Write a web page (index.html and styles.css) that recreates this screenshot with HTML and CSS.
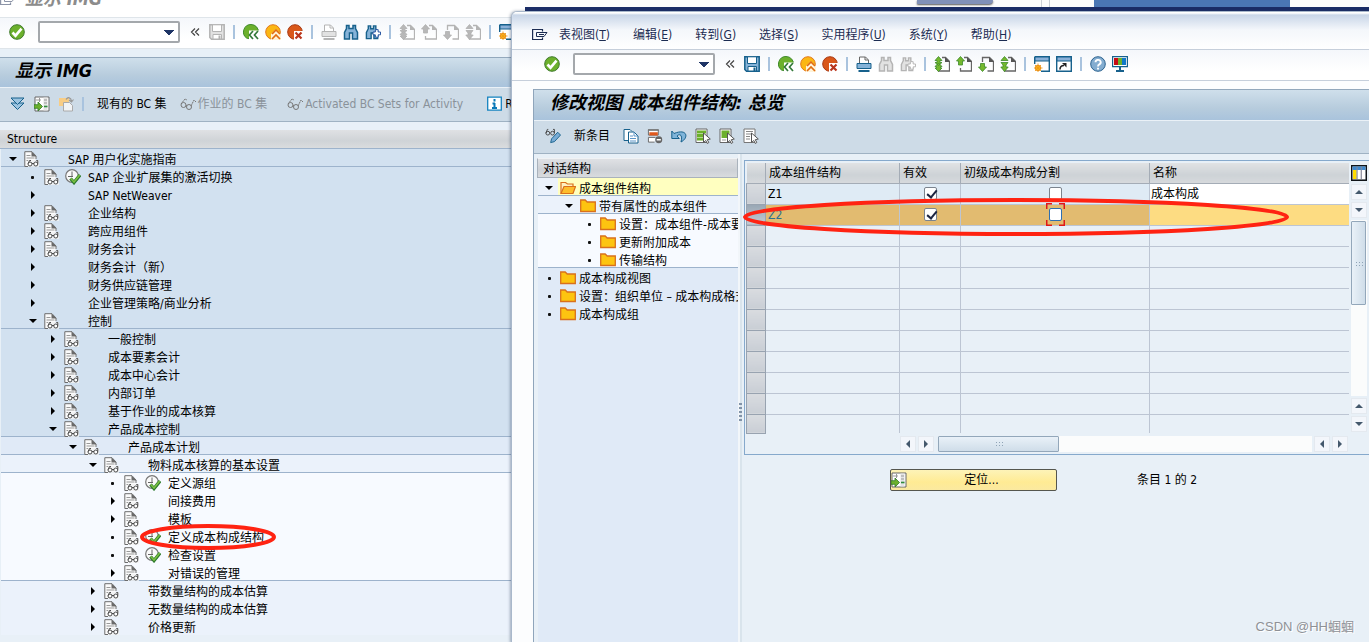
FILE: index.html
```html
<!DOCTYPE html>
<html lang="zh-CN">
<head>
<meta charset="utf-8">
<title>修改视图 成本组件结构: 总览</title>
<link rel="stylesheet" href="styles.css">
</head>
<body>
<svg class="sprite" aria-hidden="true">
  <symbol id="ok" viewBox="0 0 16 16"><circle cx="8" cy="8" r="7.3" fill="#6cb02c" stroke="#3f7a2c"/><path d="M3.5 8.5l3 3.2 6-7" fill="none" stroke="#fff" stroke-width="2.6"/></symbol>
  <symbol id="less" viewBox="0 0 10 16"><path d="M5 4.500L1.500 8 5 11.500M9 4.500L5.500 8 9 11.500" fill="none" stroke="#444" stroke-width="1.200"/></symbol>
  <symbol id="save" viewBox="0 0 16 16"><path d="M.8.8h14.4v14.400H2.500L.8 13.500z" class="mid edge" stroke-width="1.500"/><path d="M3.500.8h9v6.700h-9z" class="pale edge"/><path d="M4 10.500h8.500V15H4z" class="pale edge"/><path d="M10.500 11.500V15" class="edge" stroke-width="2"/></symbol>
  <symbol id="back" viewBox="0 0 16 16"><path d="M8 .5A7.500 7.500 0 0 0 3.500 14L9 15.500 15.500 9A7.500 7.500 0 0 0 8 .5z" fill="#6cb02c" stroke="#3f8a2c"/><path d="M6 6.500h10V16H6z" fill="#fff"/><path d="M10 7l-3.500 4 3.500 4M15 7l-3.500 4 3.500 4" fill="none" stroke="#34793a" stroke-width="1.700"/></symbol>
  <symbol id="exit" viewBox="0 0 16 16"><circle cx="8" cy="8" r="7.300" fill="#fbb714" stroke="#e2791c"/><path d="M6 10l5-5 5 5v6H6z" fill="#fff3d8"/><path d="M7 10l4-4 4 4M7 15l4-4 4 4" fill="none" stroke="#e06c10" stroke-width="1.700"/></symbol>
  <symbol id="cancel" viewBox="0 0 16 16"><circle cx="8" cy="8" r="7.300" fill="#d9581a" stroke="#a83a14"/><path d="M7 7h9v9H7z" fill="#fff"/><path d="M8.500 8.500l6 6M14.500 8.500l-6 6" stroke="#b9351c" stroke-width="2.200"/></symbol>
  <symbol id="print" viewBox="0 0 16 16"><path d="M3.500 8V1h6l3 3v4" fill="#fff" class="line" /><path d="M9 1v3h3" fill="none" class="line"/><path d="M1 7.500h14v5H1z" class="mid edge"/><path d="M2.500 15h11" class="edge" stroke-width="2"/></symbol>
  <symbol id="find" viewBox="0 0 16 16"><path d="M3.500 1.500h2.500v3h4v-3h2.500v3l2 4v6.500h-5V9h-3v6h-5V8.500l2-4z" class="mid edge" stroke-width="1.500"/></symbol>
  <symbol id="findnext" viewBox="0 0 17 16"><path d="M3.500 1.500h2.500v3h3v-3h2.500v3l2 4v6.500h-4V9h-3v6h-5V8.500l2-4z" class="mid edge" stroke-width="1.500"/><path d="M11 5.500h3v2.500h2.500v3H14v2.500h-3V11H8.500V8H11z" fill="#fff" class="rim"/></symbol>
  <symbol id="page" viewBox="0 0 16 16"><path d="M8 1.500h3.500l4 4V15H4.500v-3" fill="none" class="line" stroke-width="1.300"/><path d="M11 1v5h5z" class="fold"/></symbol>
  <symbol id="first" viewBox="0 0 16 16"><use href="#page"/><path d="M4.500.5L8 4.500H6v2h2L4.500 9.500 1 6.500h2v-2H1zM4.500 7L8 10.500H6.500V12H8l-3.500 3.500L1 12h1.500v-1.500H1z" class="go"/></symbol>
  <symbol id="prev" viewBox="0 0 16 16"><use href="#page"/><path d="M4.500.5L8.500 5h-2v4h-4V5h-2z" class="go"/></symbol>
  <symbol id="next" viewBox="0 0 16 16"><path d="M4.500 6V1.500h7l4 4V15H9.500" fill="none" class="line" stroke-width="1.300"/><path d="M11 1v5h5z" class="fold"/><path d="M4.500 15.500L.5 11h2V7.500h4V11h2z" class="go"/></symbol>
  <symbol id="last" viewBox="0 0 16 16"><use href="#page"/><path d="M4.500.5L8 4.500H1zM4.500 15.500L.8 11H3V9L1 6.500h7L6 9v2h2.200z" class="go"/></symbol>
  <symbol id="newwin" viewBox="0 0 16 16"><path d="M.7.7h14.600v14.600H7M.7.7V8" fill="#fff" stroke="#17618c" stroke-width="1.400"/><path d="M1 1h14v4H1z" fill="#8ab0d8" stroke="#17618c"/><circle cx="4" cy="12" r="2.700" fill="#fbc21c" stroke="#e58a1a"/><path d="M4 7.500v9M-.5 12h9M1 9l6 6M7 9l-6 6" stroke="#f09a18" stroke-width=".9"/></symbol>
  <symbol id="shortcut" viewBox="0 0 16 16"><path d="M.7.7h14.600v14.600H.7z" fill="#fff" stroke="#17618c" stroke-width="1.400"/><path d="M1 1h14v4H1z" fill="#8ab0d8" stroke="#17618c"/><path d="M4 13.500c0-3 1.500-4 4-4" fill="none" stroke="#222" stroke-width="1.600"/><path d="M6 7h4.500v4.500z" fill="#222"/></symbol>
  <symbol id="help" viewBox="0 0 16 16"><circle cx="8" cy="8" r="7.300" fill="#84add0" stroke="#2d6490"/><path d="M5.500 6.200a2.600 2.400 0 1 1 3.800 2.200Q8 9 8 10.500M8 11.800v1.700" fill="none" stroke="#fff" stroke-width="1.900"/></symbol>
  <symbol id="screen" viewBox="0 0 16 16"><path d="M.6 .6h14.800v10H.6z" fill="#fff" stroke="#17618c" stroke-width="1.200"/><path d="M2 2h4v7H2z" fill="#c80c14"/><path d="M6 2h4v7H6z" fill="#6cb02c"/><path d="M10 2h4v7h-4z" fill="#1078c8"/><path d="M8 11v4M4 15h8" stroke="#17618c" stroke-width="2"/></symbol>
  <symbol id="doc" viewBox="0 0 16 16"><path d="M4 15.500H.8V.7H8L12 5v3" fill="#fafafa" stroke="#6d6d6d"/><path d="M7.500.5V5.500h5z" fill="#6a6a6a"/><path d="M2.500 4.500h4M2.500 7h8M2.500 9.500h3" stroke="#999"/><path d="M4 9h11v7H4z" fill="#f2f2f2" opacity=".8"/><circle cx="6" cy="13" r="2" fill="#fff" stroke="#4a4a4a"/><circle cx="11.800" cy="13" r="2" fill="#fff" stroke="#4a4a4a"/><path d="M8 12.500h2M4.200 12.500L5.500 9.500H7M13.800 12.500V9.500h-1.500" fill="none" stroke="#4a4a4a"/></symbol>
  <symbol id="run" viewBox="0 0 16 16"><circle cx="7" cy="7" r="6.300" fill="#fafafa" stroke="#777" stroke-width="1.200"/><path d="M7 2.500V8M3 7.500h5" stroke="#666" fill="none"/><path d="M5.500 9.500l3.500 4 6-7.500" fill="none" stroke="#2d7a2d" stroke-width="3.400"/><path d="M5.800 9.500l3.200 3.500 5.700-7" fill="none" stroke="#7cc142" stroke-width="1.500"/></symbol>
  <symbol id="expand" viewBox="0 0 16 16"><path d="M1 7h13L7.500 13.500z" fill="#9cc4e0" stroke="#17618c"/><path d="M1 2h13L7.500 8.500z" fill="#9cc4e0" stroke="#17618c"/></symbol>
  <symbol id="goto" viewBox="0 0 16 16"><path d="M1 1h14v14H1z" fill="#fff" stroke="#666"/><path d="M11.500 1.500v13" stroke="#e4e4e4" stroke-width="4"/><path d="M2 4h5M5.500 2v4M10 4h3M10 7h3" stroke="#999"/><path d="M10 10.500h3.500" stroke="#2e8a3a" stroke-width="1.600"/><path d="M4 6l4.500 4.500L4 15v-2.700H0V8.700h4z" fill="#6cb02c" stroke="#2e7a2a" stroke-width=".8"/></symbol>
  <symbol id="paste" viewBox="0 0 16 16"><path d="M1 2h10v8H1z" fill="#f8cd85"/><path d="M5.500 6.500h6l3 3V15h-9z" fill="#f1f3f5" stroke="#aaa"/><path d="M8 3.500c2-3 5-2 5.500 1.500M11 4l2.500 2 2-2.500" fill="none" stroke="#999" stroke-width="1.200"/></symbol>
  <symbol id="glasses" viewBox="0 0 16 16"><circle cx="3.500" cy="9" r="2.500" fill="none" stroke="#777"/><circle cx="9" cy="11" r="2.500" fill="none" stroke="#777"/><path d="M1 8l4-5 2 1M11 10l3-6 2 2M6 9.500l1 .5" fill="none" stroke="#777" stroke-dasharray="2 .6"/></symbol>
  <symbol id="edit" viewBox="0 0 17 16"><circle cx="3" cy="5" r="2" fill="none" stroke="#444"/><circle cx="8" cy="5" r="2" fill="none" stroke="#444"/><path d="M1 5l1.500-4h1M10 5V1H8.500" fill="none" stroke="#444"/><path d="M6 15l1-4 6.500-7 3 3-6.500 7z" fill="#79acd6" stroke="#17618c"/></symbol>
  <symbol id="info" viewBox="0 0 16 16"><path d="M.7 1.200h13.600v13H.7z" fill="#fff" stroke="#1583c0" stroke-width="1.300"/><path d="M7.500 3v2.500M5.500 7.500H8M7.500 7v5M5 12h5" fill="none" stroke="#0878b8" stroke-width="2"/></symbol>
  <symbol id="copy" viewBox="0 0 16 16"><path d="M5 12.500H1v-11h6l2 2" fill="#fff" stroke="#17618c"/><path d="M5.500 4h5.500l4 4v7H5.500z" fill="#fff" stroke="#17618c"/><path d="M11 4v4h4M7 8h3M7 10.500h6M7 13h6" fill="none" stroke="#5b95c8"/></symbol>
  <symbol id="del" viewBox="0 0 17 16"><path d="M8 14.500H1.500v-5H9" fill="#fff" stroke="#666"/><path d="M1.500 1.500H12V7H1.500z" fill="#fff" stroke="#666"/><path d="M1 .8h11.500v1.700H1z" fill="#777"/><path d="M2.500 4h9v3.500h-9z" fill="#e0581c"/><circle cx="12.500" cy="12" r="3.700" fill="#666"/><path d="M10.300 12h4.400" stroke="#fff" stroke-width="1.500"/></symbol>
  <symbol id="undo" viewBox="0 0 16 16"><path d="M.8 3v7.500h7.500L6 8c3-3 6-.5 4 6 8-4 6.500-14-7-8.500z" fill="#7fb4d9" stroke="#17618c"/></symbol>
  <symbol id="cursor" viewBox="0 0 16 16"><path d="M8.500 5v9.500l2.300-2 1.500 3 1.500-1-1.500-2.800 3-.7z" fill="#fff" stroke="#555"/></symbol>
  <symbol id="selall" viewBox="0 0 16 16"><path d="M1 1h11v13.500H1z" fill="#fff" stroke="#666"/><path d="M2 4h9M2 7.500h7M2 11h6" stroke="#6cb02c" stroke-width="2.800"/><use href="#cursor"/></symbol>
  <symbol id="selblock" viewBox="0 0 16 16"><path d="M1 1h11v13.500H1z" fill="#fff" stroke="#666"/><path d="M2.500 2.500h8V10h-8z" fill="#6cb02c"/><path d="M3 12h4" stroke="#999"/><use href="#cursor"/></symbol>
  <symbol id="desel" viewBox="0 0 16 16"><path d="M1 1h11v13.500H1z" fill="#fff" stroke="#777"/><path d="M3 3.500h7M3 6h6M3 8.500h4M3 11h4" stroke="#888"/><use href="#cursor"/></symbol>
  <symbol id="menu" viewBox="0 0 16 14"><path d="M10.500 3.500V1.500H.6v10h9.900V9.500" fill="none" stroke="#1c2c52" stroke-width="1.200"/><path d="M4.500 4.500h10.500l-3 4H4.500zM7 6.500h5" fill="none" stroke="#1c2c52"/></symbol>
  <symbol id="folder" viewBox="0 0 16 14"><path d="M.7 12.500V1h4.500l2 2h8.100v9.500z" fill="#fdc410" stroke="#d9701c" stroke-width="1.300"/></symbol>
  <symbol id="folderopen" viewBox="0 0 16 14"><path d="M1 12.500V1.500h4.500l2 1.500h5.500v2.500" fill="#fff0c0" stroke="#d9701c" stroke-width="1.200"/><path d="M1 12.500l3-7h11.500l-2.500 7z" fill="#fdbd2c" stroke="#d9701c" stroke-width="1.200"/></symbol>
  <symbol id="config" viewBox="0 0 16 16"><path d="M.7.7h14.600v14.600H.7z" fill="#d7dde3" stroke="#101418" stroke-width="1.400"/><path d="M1.500 1.500h13v3.500h-13z" fill="#3e8ad0"/><path d="M2 5h3.500v9H2z" fill="#ffdc00"/><path d="M7 5h2.500v9H7zM11 5h3v9h-3z" fill="#fff"/><path d="M6 2v12M10.300 2v12" stroke="#889"/></symbol>
</svg>

<div class="desktop">
  <section class="img-window" aria-label="显示 IMG">
    <header class="img-caption"><svg class="i16"><use href="#menu"/></svg><span>显示 IMG</span></header>
    <div class="toolbar toolbar-img">
      <button class="tool ok" aria-label="确认"><svg class="i16"><use href="#ok"/></svg></button>
      <select class="command" aria-label="命令"><option></option></select>
      <button class="tool less" aria-label="收起"><svg class="i10"><use href="#less"/></svg></button>
      <button class="tool off" aria-label="保存" disabled><svg class="i16"><use href="#save"/></svg></button>
      <i class="sep"></i>
      <button class="tool" aria-label="返回"><svg class="i16"><use href="#back"/></svg></button>
      <button class="tool" aria-label="退出"><svg class="i16"><use href="#exit"/></svg></button>
      <button class="tool" aria-label="取消"><svg class="i16"><use href="#cancel"/></svg></button>
      <i class="sep"></i>
      <button class="tool off" aria-label="打印" disabled><svg class="i16"><use href="#print"/></svg></button>
      <button class="tool" aria-label="查找"><svg class="i16"><use href="#find"/></svg></button>
      <button class="tool" aria-label="查找下一个"><svg class="i16"><use href="#findnext"/></svg></button>
      <i class="sep"></i>
      <button class="tool off" aria-label="第一页" disabled><svg class="i16"><use href="#first"/></svg></button>
      <button class="tool off" aria-label="上一页" disabled><svg class="i16"><use href="#prev"/></svg></button>
      <button class="tool off" aria-label="下一页" disabled><svg class="i16"><use href="#next"/></svg></button>
      <button class="tool off" aria-label="最后一页" disabled><svg class="i16"><use href="#last"/></svg></button>
      <i class="sep"></i>
      <button class="tool" aria-label="新建会话"><svg class="i16"><use href="#newwin"/></svg></button>
    </div>
    <h1 class="title">显示 IMG</h1>
    <div class="appbar appbar-img">
      <button class="tool" aria-label="展开"><svg class="i16"><use href="#expand"/></svg></button>
      <button class="tool" aria-label="定位"><svg class="i16"><use href="#goto"/></svg></button>
      <button class="tool" aria-label="粘贴"><svg class="i16"><use href="#paste"/></svg></button>
      <i class="sep"></i>
      <button class="tool text">现有的 BC 集</button>
      <button class="tool text dim" disabled><svg class="i16"><use href="#glasses"/></svg>作业的 BC 集</button>
      <button class="tool text dim" disabled><svg class="i16"><use href="#glasses"/></svg>Activated BC Sets for Activity</button>
      <button class="tool text"><svg class="i16"><use href="#info"/></svg>R</button>
    </div>
    <div class="tree-head">Structure</div>
    <ul class="tree img-tree">
      <li class="l0 rule"><i class="down"></i><svg class="i16"><use href="#doc"/></svg><span>SAP 用户化实施指南</span></li>
      <li class="l1"><i class="dot"></i><svg class="i16"><use href="#doc"/></svg><svg class="i16"><use href="#run"/></svg><span>SAP 企业扩展集的激活切换</span></li>
      <li class="l1"><i class="right"></i><span>SAP NetWeaver</span></li>
      <li class="l1"><i class="right"></i><svg class="i16"><use href="#doc"/></svg><span>企业结构</span></li>
      <li class="l1"><i class="right"></i><svg class="i16"><use href="#doc"/></svg><span>跨应用组件</span></li>
      <li class="l1"><i class="right"></i><svg class="i16"><use href="#doc"/></svg><span>财务会计</span></li>
      <li class="l1"><i class="right"></i><span>财务会计（新）</span></li>
      <li class="l1"><i class="right"></i><span>财务供应链管理</span></li>
      <li class="l1"><i class="right"></i><span>企业管理策略/商业分析</span></li>
      <li class="l1 rule"><i class="down"></i><svg class="i16"><use href="#doc"/></svg><span>控制</span></li>
      <li class="l2"><i class="right"></i><svg class="i16"><use href="#doc"/></svg><span>一般控制</span></li>
      <li class="l2"><i class="right"></i><svg class="i16"><use href="#doc"/></svg><span>成本要素会计</span></li>
      <li class="l2"><i class="right"></i><svg class="i16"><use href="#doc"/></svg><span>成本中心会计</span></li>
      <li class="l2"><i class="right"></i><svg class="i16"><use href="#doc"/></svg><span>内部订单</span></li>
      <li class="l2"><i class="right"></i><svg class="i16"><use href="#doc"/></svg><span>基于作业的成本核算</span></li>
      <li class="l2 rule"><i class="down"></i><svg class="i16"><use href="#doc"/></svg><span>产品成本控制</span></li>
      <li class="l3 rule"><i class="down"></i><svg class="i16"><use href="#doc"/></svg><span>产品成本计划</span></li>
      <li class="l4 rule"><i class="down"></i><svg class="i16"><use href="#doc"/></svg><span>物料成本核算的基本设置</span></li>
      <li class="l5"><i class="dot"></i><svg class="i16"><use href="#doc"/></svg><svg class="i16"><use href="#run"/></svg><span>定义源组</span></li>
      <li class="l5"><i class="right"></i><svg class="i16"><use href="#doc"/></svg><span>间接费用</span></li>
      <li class="l5"><i class="right"></i><svg class="i16"><use href="#doc"/></svg><span>模板</span></li>
      <li class="l5"><i class="dot"></i><svg class="i16"><use href="#doc"/></svg><svg class="i16"><use href="#run"/></svg><span>定义成本构成结构</span>
        <svg class="mark-small" viewBox="0 0 138 28"><ellipse cx="69" cy="14" rx="66" ry="11"/></svg></li>
      <li class="l5"><i class="dot"></i><svg class="i16"><use href="#doc"/></svg><svg class="i16"><use href="#run"/></svg><span>检查设置</span></li>
      <li class="l5 rule"><i class="right"></i><svg class="i16"><use href="#doc"/></svg><span>对错误的管理</span></li>
      <li class="l4"><i class="right"></i><svg class="i16"><use href="#doc"/></svg><span>带数量结构的成本估算</span></li>
      <li class="l4"><i class="right"></i><svg class="i16"><use href="#doc"/></svg><span>无数量结构的成本估算</span></li>
      <li class="l4"><i class="right"></i><svg class="i16"><use href="#doc"/></svg><span>价格更新</span></li>
    </ul>
  </section>

  <div class="behind"><i class="tab"></i><i class="gutter"></i><i class="photo"></i></div>

  <section class="view-window" aria-label="修改视图">
    <nav class="menubar">
      <svg class="i16"><use href="#menu"/></svg>
      <a href="#">表视图(<u>T</u>)</a><a href="#">编辑(<u>E</u>)</a><a href="#">转到(<u>G</u>)</a><a href="#">选择(<u>S</u>)</a><a href="#">实用程序(<u>U</u>)</a><a href="#">系统(<u>Y</u>)</a><a href="#">帮助(<u>H</u>)</a>
    </nav>
    <div class="toolbar toolbar-view">
      <button class="tool ok" aria-label="确认"><svg class="i16"><use href="#ok"/></svg></button>
      <select class="command" aria-label="命令"><option></option></select>
      <button class="tool less" aria-label="收起"><svg class="i10"><use href="#less"/></svg></button>
      <button class="tool" aria-label="保存"><svg class="i16"><use href="#save"/></svg></button>
      <i class="sep"></i>
      <button class="tool" aria-label="返回"><svg class="i16"><use href="#back"/></svg></button>
      <button class="tool" aria-label="退出"><svg class="i16"><use href="#exit"/></svg></button>
      <button class="tool" aria-label="取消"><svg class="i16"><use href="#cancel"/></svg></button>
      <i class="sep"></i>
      <button class="tool" aria-label="打印"><svg class="i16"><use href="#print"/></svg></button>
      <button class="tool off" aria-label="查找" disabled><svg class="i16"><use href="#find"/></svg></button>
      <button class="tool off" aria-label="查找下一个" disabled><svg class="i16"><use href="#findnext"/></svg></button>
      <i class="sep"></i>
      <button class="tool" aria-label="第一页"><svg class="i16"><use href="#first"/></svg></button>
      <button class="tool" aria-label="上一页"><svg class="i16"><use href="#prev"/></svg></button>
      <button class="tool" aria-label="下一页"><svg class="i16"><use href="#next"/></svg></button>
      <button class="tool" aria-label="最后一页"><svg class="i16"><use href="#last"/></svg></button>
      <i class="sep"></i>
      <button class="tool" aria-label="新建会话"><svg class="i16"><use href="#newwin"/></svg></button>
      <button class="tool" aria-label="快捷方式"><svg class="i16"><use href="#shortcut"/></svg></button>
      <i class="sep"></i>
      <button class="tool" aria-label="帮助"><svg class="i16"><use href="#help"/></svg></button>
      <button class="tool" aria-label="布局"><svg class="i16"><use href="#screen"/></svg></button>
    </div>
    <div class="frame">
      <h1 class="title">修改视图 成本组件结构: 总览</h1>
      <div class="appbar appbar-view">
        <button class="tool" aria-label="显示/更改"><svg class="i16"><use href="#edit"/></svg></button>
        <button class="tool text">新条目</button>
        <button class="tool" aria-label="复制"><svg class="i16"><use href="#copy"/></svg></button>
        <button class="tool" aria-label="删除"><svg class="i16"><use href="#del"/></svg></button>
        <button class="tool" aria-label="撤销"><svg class="i16"><use href="#undo"/></svg></button>
        <button class="tool" aria-label="全选"><svg class="i16"><use href="#selall"/></svg></button>
        <button class="tool" aria-label="选择块"><svg class="i16"><use href="#selblock"/></svg></button>
        <button class="tool" aria-label="取消全选"><svg class="i16"><use href="#desel"/></svg></button>
      </div>
      <div class="work">
        <aside class="dialog">
          <div class="dialog-head">对话结构</div>
          <ul class="tree dlg-tree">
            <li class="d0 current rule"><i class="down"></i><svg class="folder"><use href="#folderopen"/></svg><span>成本组件结构</span></li>
            <li class="d1 rule"><i class="down"></i><svg class="folder"><use href="#folder"/></svg><span>带有属性的成本组件</span></li>
            <li class="d2"><i class="dot"></i><svg class="folder"><use href="#folder"/></svg><span>设置：成本组件-成本要</span></li>
            <li class="d2"><i class="dot"></i><svg class="folder"><use href="#folder"/></svg><span>更新附加成本</span></li>
            <li class="d2 rule"><i class="dot"></i><svg class="folder"><use href="#folder"/></svg><span>传输结构</span></li>
            <li class="d0"><i class="dot"></i><svg class="folder"><use href="#folder"/></svg><span>成本构成视图</span></li>
            <li class="d0"><i class="dot"></i><svg class="folder"><use href="#folder"/></svg><span>设置：组织单位 – 成本构成格式</span></li>
            <li class="d0"><i class="dot"></i><svg class="folder"><use href="#folder"/></svg><span>成本构成组</span></li>
          </ul>
        </aside>
        <div class="splitter"><i></i></div>
        <main class="content">
          <div class="panel">
            <div class="panel-main">
              <table class="grid">
                <colgroup><col class="c-sel"><col class="c-key"><col class="c-act"><col class="c-split"><col></colgroup>
                <thead><tr><th></th><th>成本组件结构</th><th>有效</th><th>初级成本构成分割</th><th>名称</th></tr></thead>
                <tbody>
                  <tr class="first"><th></th><td>Z1</td><td class="mid-cell"><input type="checkbox" aria-label="Z1 有效" checked></td><td class="mid-cell"><input type="checkbox" aria-label="Z1 初级成本构成分割"></td><td class="name">成本构成</td></tr>
                  <tr class="picked"><th></th><td>Z2</td><td class="mid-cell"><input type="checkbox" aria-label="Z2 有效" checked></td><td class="mid-cell"><span class="focus"><input type="checkbox" aria-label="Z2 初级成本构成分割"><svg viewBox="0 0 19 23"><path d="M.5 6V.5H6M13 .5h5.500V6M18.500 17v5.500H13M6 22.500H.5V17"/></svg></span></td><td class="name"></td></tr>
                  <tr><th></th><td></td><td></td><td></td><td></td></tr>
                  <tr><th></th><td></td><td></td><td></td><td></td></tr>
                  <tr><th></th><td></td><td></td><td></td><td></td></tr>
                  <tr><th></th><td></td><td></td><td></td><td></td></tr>
                  <tr><th></th><td></td><td></td><td></td><td></td></tr>
                  <tr><th></th><td></td><td></td><td></td><td></td></tr>
                  <tr><th></th><td></td><td></td><td></td><td></td></tr>
                  <tr><th></th><td></td><td></td><td></td><td></td></tr>
                  <tr><th></th><td></td><td></td><td></td><td></td></tr>
                  <tr class="end"><th></th><td></td><td></td><td></td><td></td></tr>
                </tbody>
              </table>
              <div class="hscroll">
                <button class="arrow" aria-label="向左"><i class="tri-l"></i></button>
                <button class="arrow" aria-label="向右"><i class="tri-r"></i></button>
                <div class="htrack"><div class="hthumb"><i class="grip"></i></div></div>
                <button class="arrow" aria-label="向左"><i class="tri-l"></i></button>
                <button class="arrow" aria-label="向右"><i class="tri-r"></i></button>
              </div>
            </div>
            <div class="vscroll">
              <button class="tool config" aria-label="配置"><svg class="i16"><use href="#config"/></svg></button>
              <button class="arrow" aria-label="向上"><i class="tri-u"></i></button>
              <button class="arrow" aria-label="向下"><i class="tri-d"></i></button>
              <div class="vtrack"><div class="vthumb"><i class="grip"></i></div></div>
              <button class="arrow" aria-label="向上"><i class="tri-u"></i></button>
              <button class="arrow" aria-label="向下"><i class="tri-d"></i></button>
            </div>
            <svg class="mark-big" viewBox="0 0 550 40"><ellipse cx="275" cy="20" rx="271" ry="17"/></svg>
          </div>
          <div class="below">
            <button class="position"><svg class="i16"><use href="#goto"/></svg><span>定位...</span></button>
            <span>条目 1 的 2</span>
          </div>
        </main>
      </div>
    </div>
  </section>
  <div class="credit">CSDN @HH蝈蝈</div>
</div>
</body>
</html>
```

FILE: styles.css
```css
* { box-sizing: border-box; }

body {
  margin: 0;
  font: 12px/18px "DejaVu Sans Condensed", "Noto Sans", "Noto Sans CJK SC", sans-serif;
  color: #000;
}

.sprite { position: absolute; width: 0; height: 0; }
.desktop { position: relative; min-height: 100vh; overflow: hidden; background: #e8f0f7; }

/* icon paint */
.edge { stroke: var(--edge, #17618c); }
.mid { fill: var(--mid, #86b3d8); }
.pale { fill: #fff; }
.rim { stroke: var(--edge, #1c4c9c); }
.line { stroke: var(--line, #666); }
.fold { fill: var(--line, #555); }
.go { fill: var(--go, #74b82e); stroke: var(--go-edge, #3c8a2a); stroke-width: .8px; }
.off { --edge: #b4b4b4; --mid: #e2e2e2; --line: #b4b4b4; --go: #b8b8b8; --go-edge: #b0b0b0; }

.i16 { width: 16px; height: 16px; flex: none; display: block; }
.i10 { width: 10px; height: 16px; flex: none; display: block; }

.tool {
  display: flex; align-items: center; flex: none;
  padding: 0; border: 0; background: none;
  font: inherit; color: #000; white-space: nowrap;
}
.tool.dim { color: #8a929a; }
.tool.text { gap: 2px; }
.sep { flex: none; width: 2px; height: 14px; margin: 0 2px; background: #a9c3de; }

/* shared bars */
.toolbar { display: flex; align-items: center; gap: 6px; height: 31px; padding-bottom: 2px; background: linear-gradient(#f4f7fb, #fff 70%); }
.toolbar .ok { margin-right: 7px; }
.toolbar .less { margin: 0 3px 0 4px; }
.command {
  appearance: none; flex: none;
  width: 142px; height: 22px; margin: 0; padding: 0 20px 0 4px;
  border: 2px solid #a4a8ac; border-radius: 2px;
  background-color: #fff;
  background-image: linear-gradient(to bottom right, #1f3566 50%, transparent 52%), linear-gradient(to bottom left, #1f3566 50%, transparent 52%);
  background-size: 5px 5px;
  background-position: right 4px center, right 9px center;
  background-repeat: no-repeat;
  font: inherit;
}
.title {
  margin: 0; height: 31px;
  border-top: 1px solid #93a8bc; border-bottom: 1px solid #eaf1f7;
  background: linear-gradient(#cfdfeb, #b7ccdd 60%, #a9c3dc);
  font-size: 18px; line-height: 26px; font-weight: bold; font-style: italic;
  white-space: nowrap;
}
.appbar {
  display: flex; align-items: center; height: 34px; padding-bottom: 2px;
  border-bottom: 1px solid #9fb2c3; background: #cddbe7;
}

/* trees */
.tree { list-style: none; margin: 0; padding: 0; }
.tree li { position: relative; display: grid; align-items: center; height: 18px; white-space: nowrap; }
.tree li.rule { border-bottom: 1px solid #9db3cc; }
.tree li.rule > * { margin-bottom: -1px; }
.tree i { grid-column: 1; grid-row: 1; justify-self: center; }
.tree span { padding-top: 2px; line-height: 18px; }
.down { border: 4px solid transparent; border-top: 4px solid #000; border-bottom: 0; }
.right { border: 4px solid transparent; border-left: 4px solid #000; border-right: 0; }
.dot { width: 3px; height: 3px; border-radius: 1px; background: #111; }

/* left window */
.img-window { min-height: 100vh; padding-bottom: 8px; background: #e8f0f7; }
.img-caption {
  display: flex; align-items: flex-end; gap: 9px; height: 18px; padding-bottom: 9px;
  border-bottom: 1px solid #dfe5ea; background: #fff;
  color: #8c8c8c; font-size: 18px; font-weight: bold; font-style: italic;
  overflow: hidden;
}
.img-caption .i16 { opacity: .5; }
.toolbar-img { padding-left: 9px; border-bottom: 1px solid #dfe5ea; }
.img-window .title { padding-left: 15px; border-top: 1px solid #93a8bc; }
.img-window .toolbar { margin-bottom: 8px; }
.appbar-img { padding-left: 10px; gap: 8px; }
.appbar-img .sep { margin: 0; }
.appbar-img .text { margin-left: 5px; }
.appbar-img .dim + .text { margin-left: 12px; }
.appbar-img .text:last-child { margin-left: 16px; }
.tree-head {
  height: 27px; padding-left: 7px; line-height: 19px;
  border-top: 8px solid #e8f0f8; border-bottom: 1px solid #9db3cc;
  background: linear-gradient(#dfe1e4, #cfd3d7 60%, #dadcde);
}
.img-tree { padding-left: 1px; background: #e8f0f7; }
.img-tree li { grid-template-columns: 23px 21px 23px auto; justify-content: start; }
.img-tree li svg:nth-of-type(1) { grid-column: 2; grid-row: 1; }
.img-tree li svg:nth-of-type(2) { grid-column: 3; grid-row: 1; }
.img-tree span { grid-column: 4; grid-row: 1; }
.l0, .l1, .l2 { background: #d2e1f0; }
.l1 { padding-left: 20px; }
.l2 { padding-left: 40px; }
.l3 { padding-left: 60px; background: #e0eaf7; }
.l4 { padding-left: 80px; background: #ebf2fb; }
.l5 { padding-left: 100px; background: #f7faff; }

/* strip of the windows behind */
.behind {
  position: absolute; left: 525px; right: 0; top: 0; height: 12px;
  border-bottom: 5px solid #1a2c66; background: #fbfbfb;
}
.behind i { position: absolute; top: 0; }
.tab { left: 392px; width: 76px; height: 4px; border-radius: 0 0 30px 3px; background: #8090b8; box-shadow: 0 1px 2px #555; }
.gutter { left: 516px; width: 9px; height: 7px; border: solid #ccd0d6; border-width: 0 1px; }
.photo { left: 569px; width: 196px; height: 7px; background: #4a76b4; }

/* right window */
.view-window {
  position: absolute; left: 511px; right: 0; top: 11px; bottom: 0;
  display: flex; flex-direction: column;
  border: 1px solid #a9b8cb; border-right: 0; border-bottom: 0; border-top-left-radius: 6px;
  background: #fcfdfe; box-shadow: -1px 0 3px rgba(40, 60, 90, .4);
  overflow: hidden;
}
.menubar {
  display: flex; align-items: center; gap: 23px; height: 38px; padding: 8px 0 0 20px;
  border-bottom: 1px solid #c6cfdb;
  background: linear-gradient(#fff 1px, #c9d6e8 3px, #f4f7fb 18px, #fff);
}
.menubar .i16 { margin-right: -12px; height: 14px; }
.menubar a { color: #1c2c52; text-decoration: none; white-space: nowrap; }
.toolbar-view { padding-left: 32px; border-bottom: 1px solid #c6cfdb; }
.frame {
  flex: 1; display: flex; flex-direction: column; min-height: 0;
  margin: 8px 0 0 21px; border-left: 1px solid #8fa5bb; background: #e8f0f7;
}
.frame .title { padding-left: 16px; flex: none; height: 32px; }
.appbar-view { flex: none; height: 33px; padding-left: 11px; gap: 8px; }
.appbar-view .text { margin: 0 5px; }
.work { flex: 1; display: flex; min-height: 0; }

.dialog { flex: none; width: 204px; padding: 4px 0 0 3px; overflow: hidden; display: flex; flex-direction: column; }
.dialog-head {
  flex: none; height: 20px; padding-left: 5px; line-height: 20px;
  border: 1px solid #a9b2bc; border-top-color: #f0f2f4;
  background: linear-gradient(#dfe1e4, #cdd1d6 60%, #d8dbde);
}
.dlg-tree { flex: 1; margin-left: 1px; background: #e0eaf7; overflow: hidden; }
.dlg-tree li { grid-template-columns: 22px 19px auto; justify-content: start; }
.folder { width: 16px; height: 14px; display: block; }
.d1 { padding-left: 20px; background: #ebf2fb; }
.d2 { padding-left: 40px; background: #f7faff; }
.current { background: linear-gradient(#ebf2fb, #ebf2fb) no-repeat left / 20px 100% #ffffc0; }

.splitter { flex: none; width: 6px; border-left: 2px solid #f2f6fa; border-right: 2px solid #e8f0f7; background: #d9e4ec; position: relative; }
.splitter i { position: absolute; left: -1px; top: 249px; width: 3px; height: 18px; background: repeating-linear-gradient(#8193a8 0 2px, transparent 2px 4px); }

.content { flex: 1; min-width: 0; padding-top: 6px; }
.panel { position: relative; display: flex; height: 295px; border: 1px solid #86a9cc; border-right: 0; }
.panel-main { flex: 1; min-width: 0; padding: 2px 0 0 1px; }
.grid { width: 100%; table-layout: fixed; border-collapse: collapse; }
.c-sel { width: 19px; }
.c-key { width: 134px; }
.c-act { width: 61px; }
.c-split { width: 189px; }
.grid td, .grid th { height: 21px; padding: 0 2px; font-weight: normal; text-align: left; border: 0 solid #bcc5d3; line-height: 18px; }
.grid td { border-width: 0 1px 1px 0; }
.grid thead th { height: 20px; padding-left: 3px; border-right: 1px solid #a4acb6; border-bottom: 1px solid #a4acb6; background: linear-gradient(#e0e2e4, #cdd2d6 60%, #d6d9dc); }
.grid td:last-child, .grid thead th:last-child { border-right: 0; }
.grid tbody th { border: 1px solid #98a3b0; background: linear-gradient(#d9dce0, #c9ced5); }
.grid .first td { background: #dfebf5; }
.grid .first .name { background: #fff; padding-left: 1px; }
.grid .picked td { background: #e2bb70; color: #2b7090; }
.grid .picked .name { background: #fddc82; }
.grid .picked th { background: linear-gradient(#98a6b4, #c3cbd3); }
.grid .end td { border-bottom: 0; }
.grid .end td, .grid .end th { height: 19px; }
.grid .mid-cell { text-align: center; }
.grid input {
  appearance: none; display: block; width: 13px; height: 13px; margin: 0 auto;
  border: 1px solid #7b848e; border-radius: 2px; background: #fff;
}
.grid input:checked::before {
  content: ""; display: block; width: 4px; height: 8px; margin: 0 0 0 4px;
  border: solid #1c2440; border-width: 0 2px 2px 0; transform: rotate(40deg);
}
.focus { position: relative; display: block; width: 19px; margin: 0 auto; }
.focus input { border-color: #2f6fb0; }
.focus svg { position: absolute; left: 0; top: -5px; width: 19px; height: 23px; fill: none; stroke: #e01818; stroke-width: 2; pointer-events: none; }

.arrow {
  display: flex; align-items: center; justify-content: center; flex: none;
  width: 16px; height: 16px; padding: 0; border: 1px solid #e4e9ef; background: #f3f6fb;
}
.tri-l, .tri-r, .tri-u, .tri-d { border: 4px solid transparent; }
.tri-l { border-right-color: #44586c; border-left: 0; }
.tri-r { border-left-color: #44586c; border-right: 0; }
.tri-u { border-bottom-color: #44586c; border-top: 0; }
.tri-d { border-top-color: #44586c; border-bottom: 0; }
.grip { width: 8px; height: 5px; background: radial-gradient(circle, #8fa3b6 1px, transparent 1px) 0 0 / 3px 3px; }
.hscroll { display: flex; gap: 2px; height: 16px; margin: 2px 1px 0 154px; }
.htrack { flex: 1; margin-left: 2px; background: #fbfcfc; }
.hthumb, .vthumb { display: flex; align-items: center; justify-content: center; border: 1px solid #93a7ba; border-radius: 1px; background: linear-gradient(#e9f1f8, #cfdde9); }
.hthumb { width: 121px; height: 16px; }
.vscroll { flex: none; width: 20px; padding: 4px 0 22px 2px; display: flex; flex-direction: column; gap: 2px; }
.config { margin-bottom: 1px; }
.vtrack { flex: 1; width: 16px; padding-top: 1px; background: #fbfcfc; }
.vthumb { width: 15px; height: 84px; background: linear-gradient(90deg, #e9f1f8, #cfdde9); }

.mark-big, .mark-small { position: absolute; z-index: 1; fill: none; stroke: #ff2312; pointer-events: none; }
.mark-big { left: -4px; top: 36px; width: 550px; height: 40px; stroke-width: 4; }
.img-tree li .mark-small { left: 138px; top: -4px; width: 138px; height: 28px; stroke-width: 4; }

.below { display: flex; align-items: center; gap: 80px; padding: 14px 0 0 146px; white-space: nowrap; }
.position {
  display: flex; align-items: center; width: 167px; height: 22px; padding: 0;
  border: 1px solid #55564e; border-radius: 2px;
  background: linear-gradient(#fdf3b8, #ffeb94 60%, #fbe9a0);
  font: inherit; color: #000;
}
.position span { flex: 1; text-align: center; }

.credit { position: absolute; right: 15px; bottom: 6px; font: 13px/20px "Liberation Sans", "Noto Sans CJK SC", sans-serif; color: #8e9196; text-shadow: 1px 1px 0 #fff; }
```
